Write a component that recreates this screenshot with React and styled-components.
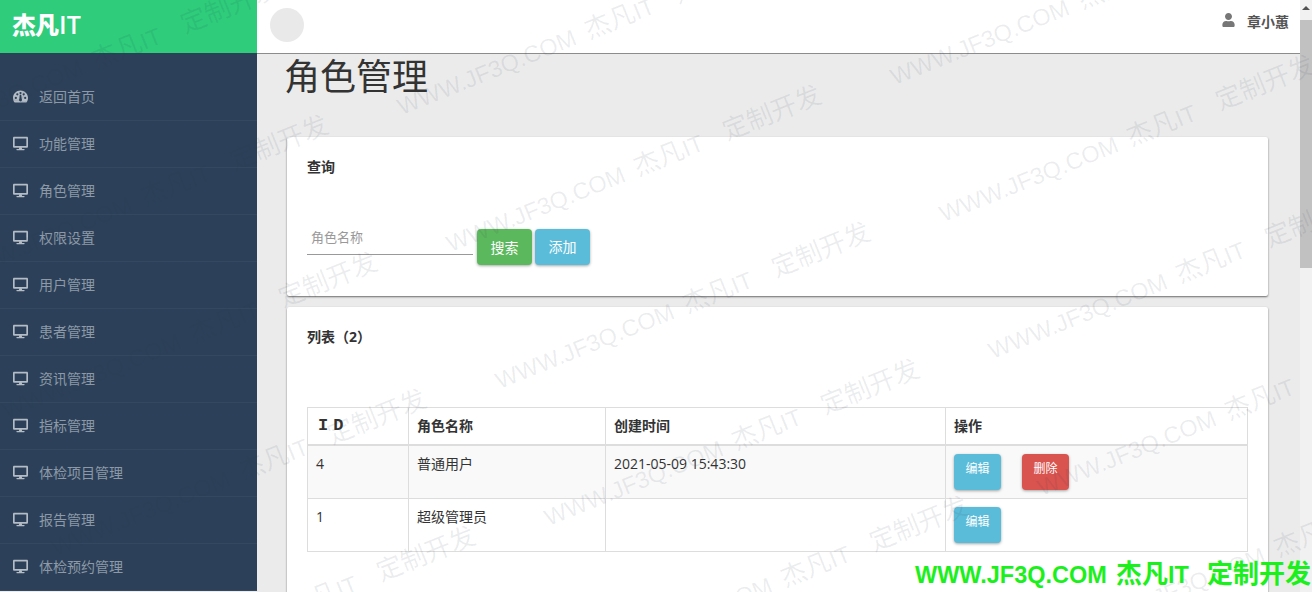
import React from "react";
import styled, { createGlobalStyle } from "styled-components";
import { FaDesktop, FaUser } from "react-icons/fa";

const FONT = `"Open Sans","Noto Sans CJK SC",sans-serif`;

const menu = ["功能管理", "角色管理", "权限设置", "用户管理", "患者管理", "资讯管理", "指标管理", "体检项目管理", "报告管理", "体检预约管理"];

const marks = [];
for (let i = -1; i < 3; i++) {
    for (let j = -1; j < 5; j++) {
        marks.push({ x: 403 + 493 * i + 49 * j, y: 118 - 30 * i + 137 * j });
    }
}

// same wording in the faint repeat and the green line at the bottom
const MarkText = () => (<>
    WWW.JF3Q.COM <Cjk>杰凡</Cjk>IT{"\u00a0\u00a0"}<Cjk>定制开发</Cjk>
</>);

const DashboardIcon = () => (
    <svg viewBox="0 0 16 13" fill="currentColor" fillRule="evenodd">
        <path d="M8 0C3.6 0 0 3.6 0 8c0 1.9.7 3.6 1.8 5h12.4C15.3 11.6 16 9.9 16 8c0-4.4-3.6-8-8-8zM3 6.8a1.2 1.2 0 1 1 0 2.4 1.2 1.2 0 0 1 0-2.4zM4.6 3a1.2 1.2 0 1 1 0 2.4 1.2 1.2 0 0 1 0-2.4zM8 1.6a1.2 1.2 0 1 1 0 2.4 1.2 1.2 0 0 1 0-2.4zM11.4 3a1.2 1.2 0 1 1 0 2.4 1.2 1.2 0 0 1 0-2.4zM13 6.8a1.2 1.2 0 1 1 0 2.4 1.2 1.2 0 0 1 0-2.4zM7.2 4.6h1.6l.5 4.6a1.6 1.6 0 1 1-2.6 0z" />
    </svg>
);

function App() {
    return (<>
    <GlobalStyle />
    <Page>
        <Sidebar>
            <Logo>杰凡<LogoLatin>IT</LogoLatin></Logo>
            <Menu>
                <MenuItem><DashboardIcon /><span>返回首页</span></MenuItem>
                {menu.map(m => <MenuItem key={m}><FaDesktop /><span>{m}</span></MenuItem>)}
            </Menu>
        </Sidebar>
        <Main>
            <Header>
                <Avatar />
                <UserBox><FaUser /><span>章小蕙</span></UserBox>
            </Header>
            <Content>
                <Title>角色管理</Title>
                <Card>
                    <CardTitle>查询</CardTitle>
                    <SearchRow>
                        <SearchInput placeholder="角色名称" />
                        <Button color="#5cb85c">搜索</Button>
                        <Button color="#5bbcd9" raised>添加</Button>
                    </SearchRow>
                </Card>
                <ListCard>
                    <CardTitle>列表（2）</CardTitle>
                    <Table>
                        <colgroup>
                            <col width="101" />
                            <col width="197" />
                            <col width="340" />
                            <col width="302" />
                        </colgroup>
                        <thead>
                            <tr>
                                <IdHead>ID</IdHead>
                                <th>角色名称</th>
                                <th>创建时间</th>
                                <th>操作</th>
                            </tr>
                        </thead>
                        <tbody>
                            <tr>
                                <td>4</td>
                                <td>普通用户</td>
                                <td>2021-05-09 15:43:30</td>
                                <td>
                                    <SmallButton color="#5bbcd9">编辑</SmallButton>
                                    <SmallButton color="#d9534f">删除</SmallButton>
                                </td>
                            </tr>
                            <tr>
                                <td>1</td>
                                <td>超级管理员</td>
                                <td></td>
                                <td><SmallButton color="#5bbcd9">编辑</SmallButton></td>
                            </tr>
                        </tbody>
                    </Table>
                </ListCard>
            </Content>
        </Main>
        <Scrollbar>
            <ScrollArrow />
            <ScrollThumb />
        </Scrollbar>
        {marks.map(p => <Watermark key={p.x + "_" + p.y} style={{ left: p.x, top: p.y }}><MarkText /></Watermark>)}
        <FooterMark><MarkText /></FooterMark>
    </Page>
    </>);
}

const GlobalStyle = createGlobalStyle`
    html,body{
        margin:0;
        padding:0;
        height:592px;
        overflow:hidden;
        background:#ebebeb;
    }
    *{
        box-sizing:border-box;
    }
`;

const Page = styled.div`
    position:relative;
    display:flex;
    width:1312px;
    height:592px;
    overflow:hidden;
    font-family:${FONT};
    font-size:14px;
    color:#333;
    background:#ebebeb;
`;

const Sidebar = styled.div`
    width:257px;
    height:591px;
    flex:none;
    background:#2c4159;
    overflow:hidden;
`;

const Logo = styled.div`
    height:53px;
    background:#2ecc7b;
    color:#fff;
    font-size:24px;
    font-weight:900;
    line-height:49px;
    padding-left:12px;
    letter-spacing:-1px;
`;

const LogoLatin = styled.span`
    font-weight:600;
    font-size:25px;
    letter-spacing:0;
    margin-left:1px;
`;

const Menu = styled.div`
    padding-top:21px;
`;

const MenuItem = styled.div`
    display:flex;
    align-items:center;
    height:47px;
    padding:0 0 2px 13px;
    gap:11px;
    color:#8d99a7;
    font-size:14px;
    border-bottom:1px solid #34495f;
    svg{
        width:15px;
        height:15px;
        color:#b4bcc6;
        flex:none;
    }
`;

const Main = styled.div`
    flex:1;
    min-width:0;
    display:flex;
    flex-direction:column;
`;

const Header = styled.div`
    height:54px;
    flex:none;
    display:flex;
    align-items:flex-start;
    justify-content:space-between;
    background:#fff;
    border-bottom:1px solid #8c8c8c;
    padding:8px 11px 0 13px;
`;

const Avatar = styled.div`
    width:34px;
    height:34px;
    border-radius:50%;
    background:#e9e9e9;
`;

const UserBox = styled.div`
    display:flex;
    align-items:center;
    gap:12px;
    height:26px;
    font-size:14px;
    font-weight:700;
    color:#555;
    svg{
        width:13px;
        height:14px;
        color:#777;
        margin-top:-3px;
    }
`;

const Content = styled.div`
    flex:1;
    padding:0 32px 0 30px;
`;

const Title = styled.h1`
    margin:0 0 0 -3px;
    height:83px;
    font-size:36px;
    font-weight:400;
    line-height:46px;
    color:#333;
`;

const Card = styled.div`
    background:#fff;
    border-radius:2px;
    box-shadow:0 1px 2px rgba(0,0,0,.55);
    padding:19px 20px;
    height:159px;
`;

const ListCard = styled(Card)`
    margin-top:11px;
    height:300px;
`;

const CardTitle = styled.div`
    font-size:14px;
    font-weight:700;
    color:#333;
    line-height:22px;
`;

const SearchRow = styled.div`
    display:flex;
    align-items:flex-end;
    gap:3px;
    margin-top:40px;
`;

const SearchInput = styled.input`
    width:166px;
    height:37px;
    margin-right:1px;
    margin-bottom:10px;
    border:0;
    border-bottom:1px solid #999;
    outline:none;
    background:transparent;
    padding:2px 4px 0;
    font-family:${FONT};
    font-size:13px;
    &::placeholder{
        color:#999;
    }
`;

const Button = styled.button`
    width:55px;
    height:36px;
    padding:${p => p.raised ? "0 0 2px" : "0"};
    border:0;
    border-radius:4px;
    background:${p => p.color};
    color:#fff;
    font-family:${FONT};
    font-size:14px;
    box-shadow:0 1px 3px rgba(0,0,0,.35);
`;

const SmallButton = styled(Button)`
    width:47px;
    font-size:12px;
    padding:0 0 8px;
    vertical-align:top;
    & + &{
        margin-left:21px;
    }
`;

const Table = styled.table`
    width:940px;
    margin-top:59px;
    border-collapse:collapse;
    table-layout:fixed;
    th,td{
        border:1px solid #ddd;
        padding:8px;
        line-height:20px;
        text-align:left;
        vertical-align:top;
        font-size:14px;
    }
    th{
        height:37px;
        font-weight:700;
        border-bottom-width:2px;
    }
    td{
        height:53px;
    }
    tbody tr:first-child td{
        background:#f9f9f9;
    }
`;

const IdHead = styled.th`
    && {
        font-family:"Liberation Mono",monospace;
        font-size:17px;
        letter-spacing:5px;
        padding-left:10px;
    }
`;

const Scrollbar = styled.div`
    width:12px;
    flex:none;
    background:#f1f1f1;
    display:flex;
    flex-direction:column;
`;

const ScrollArrow = styled.div`
    height:20px;
    display:flex;
    justify-content:center;
    padding-top:6px;
    &::before{
        content:"";
        width:0;
        height:0;
        border-left:4px solid transparent;
        border-right:4px solid transparent;
        border-bottom:4px solid #505050;
    }
`;

const ScrollThumb = styled.div`
    height:248px;
    background:#c1c1c1;
`;

const Cjk = styled.span`
    font-size:26px;
`;

const Watermark = styled.div`
    position:absolute;
    white-space:nowrap;
    pointer-events:none;
    font-family:"Liberation Sans","Noto Sans CJK SC",sans-serif;
    font-size:23.5px;
    line-height:24px;
    word-spacing:5px;
    color:rgba(40,55,75,.09);
    transform-origin:0 100%;
    transform:translateY(-24px) rotate(-22deg);
`;

const FooterMark = styled.div`
    position:absolute;
    left:915px;
    top:559px;
    white-space:nowrap;
    font-family:"Liberation Sans","Noto Sans CJK SC",sans-serif;
    font-size:23.5px;
    font-weight:700;
    line-height:30px;
    word-spacing:2.5px;
    color:#1cf01c;
`;

export default App;
